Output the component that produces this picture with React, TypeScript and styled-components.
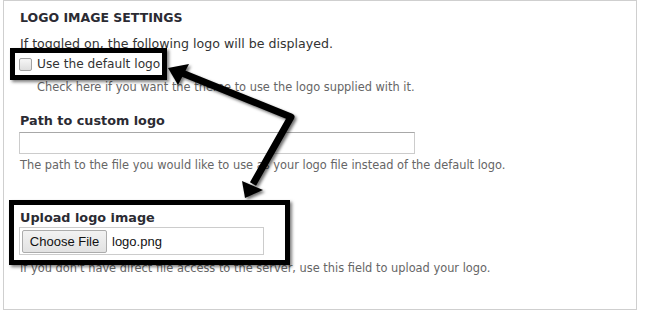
import * as React from "react";
import styled, { createGlobalStyle } from "styled-components";

const GlobalStyle = createGlobalStyle`
  html, body {
    margin: 0;
    padding: 0;
    background: #fff;
  }
  body {
    font-family: "DejaVu Sans", Verdana, sans-serif;
    color: #333;
  }
`;

type Box = { left: number; top: number; width: number; height: number };

const callouts: Array<Box> = [
  { left: 10, top: 48, width: 157, height: 32 },
  { left: 9, top: 200, width: 281, height: 65 },
];

function App() {
  const [useDefault, setUseDefault] = React.useState(false);
  const [logoPath, setLogoPath] = React.useState("");

  return (
    <Page>
      <GlobalStyle />
      <Panel>
        <Legend>Logo image settings</Legend>
        <Intro>If toggled on, the following logo will be displayed.</Intro>
        <CheckRow>
          <Checkbox
            type="checkbox"
            checked={useDefault}
            onChange={(event: React.ChangeEvent<HTMLInputElement>) =>
              setUseDefault(event.currentTarget.checked)
            }
          />
          <CheckLabel>Use the default logo</CheckLabel>
        </CheckRow>
        <Description $indent>
          Check here if you want the theme to use the logo supplied with it.
        </Description>

        <FieldLabel $gap={18}>Path to custom logo</FieldLabel>
        <TextInput
          value={logoPath}
          onChange={(event: React.ChangeEvent<HTMLInputElement>) =>
            setLogoPath(event.currentTarget.value)
          }
        />
        <Description>
          The path to the file you would like to use as your logo file instead
          of the default logo.
        </Description>

        <FieldLabel $gap={37}>Upload logo image</FieldLabel>
        <FileField>
          <FileButton type="button">Choose File</FileButton>
          <FileName>logo.png</FileName>
        </FileField>
        <Description $gap={5}>
          If you don't have direct file access to the server, use this field to
          upload your logo.
        </Description>
      </Panel>

      {/* annotation layer drawn over the form */}
      {callouts.map((box, i) => (
        <Callout
          key={i}
          style={{
            left: box.left,
            top: box.top,
            width: box.width,
            height: box.height,
          }}
        />
      ))}
      <ArrowLayer width="651" height="311" viewBox="0 0 651 311">
        <defs>
          <filter id="arrowShadow" x="-20%" y="-20%" width="140%" height="140%">
            <feDropShadow dx="2" dy="2" stdDeviation="1.6" floodColor="#000" floodOpacity="0.55" />
          </filter>
        </defs>
        <g filter="url(#arrowShadow)" fill="#000">
          <polyline
            points="182,73 291,117 253,184"
            fill="none"
            stroke="#000"
            strokeWidth="7"
            strokeLinejoin="round"
          />
          <polygon points="168,68 189,64 178,85" />
          <polygon points="245,198 242,181 263,190" />
        </g>
      </ArrowLayer>
    </Page>
  );
}

export default App;

const Page = styled.div`
  position: relative;
  width: 651px;
  height: 311px;
  overflow: hidden;
`;

const Panel = styled.fieldset`
  box-sizing: border-box;
  display: flex;
  flex-direction: column;
  align-items: flex-start;
  width: 634px;
  height: 310px;
  margin: 0 0 0 3px;
  padding: 9px 15px 0 15px;
  border: 1px solid #cfcfcf;
  min-width: 0;
`;

const Legend = styled.div`
  font-size: 12.5px;
  line-height: 16px;
  font-weight: 700;
  text-transform: uppercase;
  color: #2b2b33;
  padding-left: 1px;
`;

const Intro = styled.p`
  margin: 10px 0 0 1px;
  font-size: 12.6px;
  line-height: 16px;
  color: #333;
`;

const CheckRow = styled.label`
  display: flex;
  align-items: center;
  gap: 5px;
  margin-top: 4px;
  height: 16px;
`;

const Checkbox = styled.input`
  appearance: none;
  box-sizing: border-box;
  width: 13px;
  height: 13px;
  margin: 1px 0 0 0;
  border: 1px solid #a3a3a3;
  border-radius: 2px;
  background: linear-gradient(#f6f6f6, #dedede);
`;

const CheckLabel = styled.span`
  font-size: 12.2px;
  line-height: 16px;
  color: #333;
`;

const Description = styled.p<{ $indent?: boolean; $gap?: number }>`
  margin: ${(p) => (p.$gap !== undefined ? p.$gap : p.$indent ? 7 : 3)}px 0 0
    ${(p) => (p.$indent ? 18 : 1)}px;
  font-size: 11.4px;
  line-height: 16px;
  color: #666;
`;

const FieldLabel = styled.div<{ $gap: number }>`
  margin: ${(p) => p.$gap}px 0 0 1px;
  font-size: 12.8px;
  line-height: 16px;
  font-weight: 700;
  color: #2b2b33;
`;

const TextInput = styled.input`
  box-sizing: border-box;
  width: 396px;
  height: 22px;
  margin-top: 3px;
  padding: 0 4px;
  border: 1px solid #cccccc;
  border-top-color: #a8a8a8;
  outline: none;
  font-family: "DejaVu Sans", sans-serif;
  font-size: 13px;
`;

const FileField = styled.div`
  box-sizing: border-box;
  display: flex;
  align-items: center;
  gap: 5px;
  width: 245px;
  height: 28px;
  margin-top: 1px;
  padding: 1px 2px;
  border: 1px solid #cccccc;
`;

const FileButton = styled.button`
  box-sizing: border-box;
  height: 23px;
  width: 85px;
  padding: 0;
  border: 1px solid #acacac;
  border-radius: 2px;
  background: linear-gradient(#f2f2f2, #e2e2e2);
  font-family: "Liberation Sans", Arial, sans-serif;
  font-size: 13px;
  color: #111;
`;

const FileName = styled.span`
  font-family: "Liberation Sans", Arial, sans-serif;
  font-size: 13px;
  color: #111;
`;

const Callout = styled.div`
  position: absolute;
  box-sizing: border-box;
  border: 5px solid #000;
  box-shadow: 2px 2px 3px rgba(0, 0, 0, 0.5);
  pointer-events: none;
`;

const ArrowLayer = styled.svg`
  position: absolute;
  left: 0;
  top: 0;
  pointer-events: none;
`;
